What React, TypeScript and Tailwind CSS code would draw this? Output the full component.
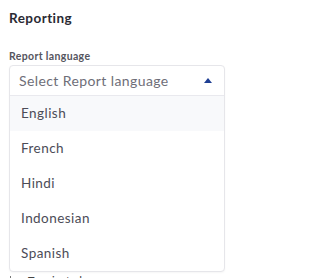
export default function App() {
  const languages = ['English', 'French', 'Hindi', 'Indonesian', 'Spanish'];

  return (
    <div className="w-[234px] h-[278px] overflow-hidden bg-white font-['Lato','Noto_Sans',sans-serif]">
      <div className="px-[9px] pt-[9px]">
        <h2 className="text-[13.5px] leading-[18px] font-bold tracking-[0.45px] text-[#2a2a33]">Reporting</h2>

        <label className="block mt-[23px] text-[10.5px] leading-[12px] font-bold tracking-[0.35px] text-[#55555e]">
          Report language
        </label>

        {/* Open select */}
        <div className="relative mt-[3px] w-[216px] rounded-[4px] border border-[#e6e6ea] bg-white shadow-[0_1px_2px_rgba(0,0,0,0.04)]">
          <div className="flex h-[30px] items-center justify-between pl-[9px] pr-[12px] border-b border-[#e9e9ee]">
            <span className="text-[14px] tracking-[0.4px] text-[#6e6e78]">Select Report language</span>
            <svg width="8" height="5" viewBox="0 0 8 5" className="text-[#1f3f93]">
              <path d="M4 0L8 5H0z" fill="currentColor" />
            </svg>
          </div>
          <ul>
            {languages.map((lang, i) => (
              <li
                key={lang}
                className={`flex h-[35px] items-center pl-[11px] text-[13.5px] tracking-[0.45px] text-[#4c4c57] ${
                  i === 0 ? 'bg-[#f8f9fb]' : ''
                }`}
              >
                {lang}
              </li>
            ))}
          </ul>
        </div>

        {/* Content hidden behind the menu */}
        <div className="flex items-center gap-[10px] mt-[1px] pl-[1px]">
          <span className="h-[10px] w-[1px] bg-[#777]" />
          <span className="text-[11px] text-[#444]">▪ Terminated</span>
        </div>
      </div>
    </div>
  );
}
